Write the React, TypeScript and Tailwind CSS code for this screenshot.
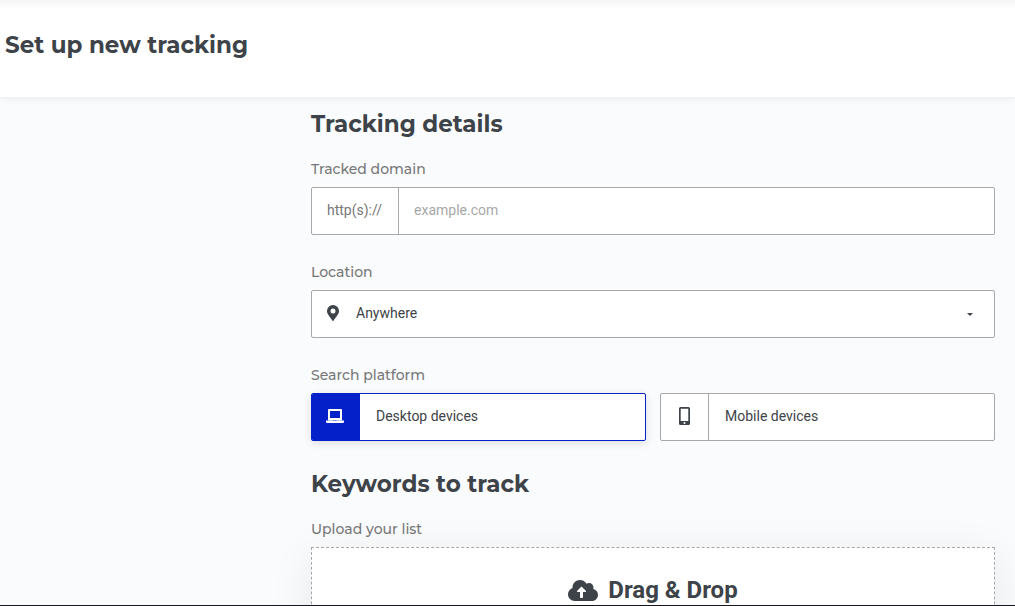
import { useState } from 'react';
import type { ReactNode } from 'react';

const LaptopIcon = () => (
  <svg className="mr-px h-[14px] w-[18px]" viewBox="0 0 18 14" fill="currentColor" aria-hidden="true">
    <path
      fillRule="evenodd"
      d="M3 0h12a1 1 0 0 1 1 1v10H2V1a1 1 0 0 1 1-1zm1 2v7h10V2z"
      clipRule="evenodd"
    />
    <path d="M2 11h14v1H2z" fillOpacity=".5" />
    <path d="M0 11.500h7l.5.500h3l.5-.500h7v1.300a1.200 1.200 0 0 1-1.200 1.200H1.200A1.200 1.200 0 0 1 0 12.800z" />
  </svg>
);

const PhoneIcon = () => (
  <svg className="h-[18px] w-[11px]" viewBox="0 0 11 18" fill="currentColor" aria-hidden="true">
    <path
      fillRule="evenodd"
      d="M1.5 0h8A1.5 1.5 0 0 1 11 1.5v15A1.5 1.5 0 0 1 9.500 18h-8A1.5 1.5 0 0 1 0 16.500v-15A1.5 1.5 0 0 1 1.500 0zM1.700 1.700v12.300h7.600V1.700zM5.500 15a1 1 0 1 0 0 2 1 1 0 0 0 0-2z"
      clipRule="evenodd"
    />
  </svg>
);

const PinIcon = () => (
  <svg className="h-4 w-3" viewBox="0 0 12 16" fill="currentColor" aria-hidden="true">
    <path
      fillRule="evenodd"
      d="M6 0a6 6 0 0 1 6 6c0 3.200-2.600 5.200-5.300 9.600a.8.8 0 0 1-1.400 0C2.600 11.200 0 9.200 0 6a6 6 0 0 1 6-6zm0 3.600a2.500 2.500 0 1 0 0 5 2.500 2.500 0 0 0 0-5z"
      clipRule="evenodd"
    />
  </svg>
);

const CloudUploadIcon = () => (
  <svg className="h-[21px] w-[30px]" viewBox="0 0 640 448" fill="currentColor" aria-hidden="true">
    <path d="M537.600 194.600c4.100-10.700 6.400-22.400 6.400-34.600 0-53-43-96-96-96-19.700 0-38.100 6-53.300 16.200C367 32.200 315.300 0 256 0c-88.400 0-160 71.600-160 160 0 2.700.1 5.400.2 8.100C40.200 187.800 0 241.200 0 304c0 79.500 64.500 144 144 144h368c70.700 0 128-57.300 128-128 0-61.900-44-113.600-102.400-125.400zM368 256h-48v112c0 8.800-7.200 16-16 16h-32c-8.800 0-16-7.200-16-16V256h-48c-14.300 0-21.400-17.200-11.300-27.300l80-80c6.200-6.200 16.400-6.200 22.600 0l80 80C389.400 238.800 382.200 256 368 256z" />
  </svg>
);

const fieldLabel =
  "mb-2 block font-['Montserrat','Inter',sans-serif] text-sm leading-5 font-medium text-[#777777]";
const sectionTitle =
  "mb-[19px] font-['Montserrat','Inter',sans-serif] text-[23px] leading-8 font-bold text-[#3d4348]";

interface PlatformOptionProps {
  value: string;
  label: string;
  icon: ReactNode;
  checked: boolean;
  onSelect: (value: string) => void;
}

function PlatformOption({ value, label, icon, checked, onSelect }: PlatformOptionProps) {
  return (
    <label
      className={`relative flex h-12 cursor-pointer overflow-hidden rounded-xs border bg-white ${
        checked ? 'border-[#0420c8] shadow-[0_2px_8px_rgba(0,0,0,0.12)]' : 'border-[#a8a8a8]'
      }`}
    >
      <input
        type="radio"
        name="platform"
        value={value}
        checked={checked}
        onChange={() => onSelect(value)}
        className="sr-only"
      />
      <span
        className={`flex w-12 shrink-0 items-center justify-center border-r pb-0.5 ${
          checked ? 'border-[#0420c8] bg-[#0420c8] text-white' : 'border-[#a8a8a8] text-[#3d4348]'
        }`}
      >
        {icon}
      </span>
      <span className="flex-1 px-4 pt-3 text-sm leading-5 text-[#3d4348]">{label}</span>
    </label>
  );
}

export default function App() {
  const [domain, setDomain] = useState('');
  const [platform, setPlatform] = useState('desktop');

  return (
    <div className="flex h-screen flex-col overflow-hidden border-b border-[#15171c] bg-[#fafbfd] font-['Roboto',sans-serif]">
      <header className="relative shrink-0 bg-white bg-linear-to-b from-[#f5f5f5] to-white to-[10px] px-[5px] pt-[29px] pb-9 shadow-[0_0_8px_rgba(0,0,0,0.1)]">
        <h1 className="font-['Montserrat','Inter',sans-serif] text-[23px] leading-8 font-bold text-[#3d4348]">
          Set up new tracking
        </h1>
      </header>

      <main className="min-h-0 flex-1 overflow-hidden pt-[11px] pr-5 pl-[311px]">
        <h2 className={sectionTitle}>Tracking details</h2>

        <label htmlFor="domain" className={fieldLabel}>
          Tracked domain
        </label>
        <div className="flex h-12 rounded-xs border border-[#a8a8a8] bg-white text-sm leading-5">
          <span className="border-r border-[#a8a8a8] pt-3 pr-4 pl-[15px] text-[#777777]">http(s)://</span>
          <input
            id="domain"
            type="text"
            placeholder="example.com"
            value={domain}
            onChange={(e) => setDomain(e.target.value)}
            className="min-w-0 flex-1 px-[15px] pb-0.5 text-[#3d4348] outline-none placeholder:text-[#a8a8a8]"
          />
        </div>

        <label htmlFor="location" className={`mt-[27px] ${fieldLabel}`}>
          Location
        </label>
        <div className="relative flex h-12 items-center rounded-xs border border-[#a8a8a8] bg-white">
          <span className="pointer-events-none absolute left-[15px] pb-0.5 text-[#3d4348]">
            <PinIcon />
          </span>
          <select
            id="location"
            className="h-full w-full appearance-none bg-transparent pb-0.5 pl-11 text-sm text-[#3d4348] outline-none"
          >
            <option>Anywhere</option>
          </select>
          <svg
            className="pointer-events-none absolute right-[21px] h-[3px] w-[6px] text-[#3d4348]"
            viewBox="0 0 6 3"
            fill="currentColor"
            aria-hidden="true"
          >
            <path d="M0 0h6L3 3z" />
          </svg>
        </div>

        <fieldset className="mt-[27px]">
          <legend className={fieldLabel}>Search platform</legend>
          <div className="grid grid-cols-2 gap-[14px]">
            <PlatformOption
              value="desktop"
              label="Desktop devices"
              icon={<LaptopIcon />}
              checked={platform === 'desktop'}
              onSelect={setPlatform}
            />
            <PlatformOption
              value="mobile"
              label="Mobile devices"
              icon={<PhoneIcon />}
              checked={platform === 'mobile'}
              onSelect={setPlatform}
            />
          </div>
        </fieldset>

        <h2 className={`mt-[27px] ${sectionTitle}`}>Keywords to track</h2>

        <label htmlFor="keywords" className={fieldLabel}>
          Upload your list
        </label>
        <button
          id="keywords"
          type="button"
          className="flex w-full items-center justify-center gap-[10px] border border-dashed border-[#a8a8a8] bg-white pt-[26px] pb-24 text-2xl leading-8 font-bold text-[#3d4348] shadow-[0_10px_40px_rgba(0,0,0,0.08)]"
        >
          <CloudUploadIcon />
          Drag &amp; Drop
        </button>
      </main>
    </div>
  );
}
